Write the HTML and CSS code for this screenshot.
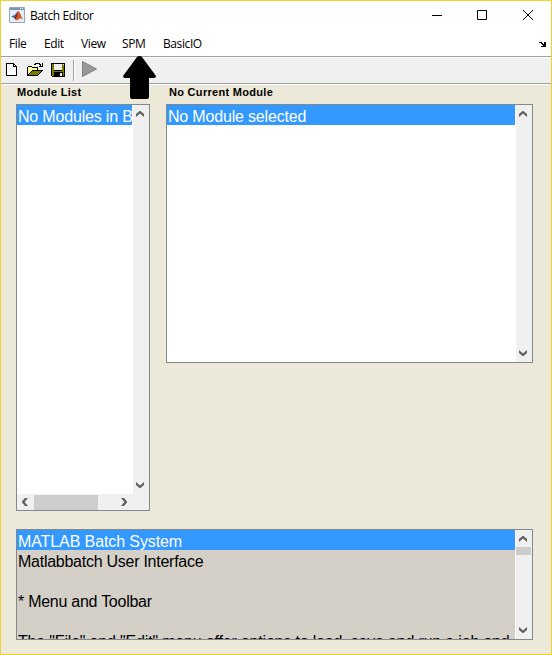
FILE: index.html
```html
<!DOCTYPE html>
<html lang="en">
<head>
<meta charset="utf-8">
<title>Batch Editor</title>
<link rel="stylesheet" href="styles.css">
</head>
<body>
<svg width="0" height="0" class="defs">
  <symbol id="up" viewBox="0 0 8 6"><path d="M0 3 4 -.4 8 3V6L4 2.6 0 6Z"/></symbol>
  <symbol id="down" viewBox="0 0 8 6"><path d="M0 0 4 3.4 8 0V3L4 6.4 0 3Z"/></symbol>
  <symbol id="left" viewBox="0 0 6 8"><path d="M3 0H6L2.6 4 6 8H3L-.4 4Z"/></symbol>
  <symbol id="right" viewBox="0 0 6 8"><path d="M0 0H3L6.4 4 3 8H0L3.4 4Z"/></symbol>
</svg>
<div class="window">
  <header class="titlebar">
    <svg class="logo" width="16" height="16" viewBox="0 0 16 16">
      <path fill="#e5eef5" stroke="#91a8ba" d="M.5.5h15v15H.5z"/>
      <path fill="#7895b2" d="M1 1h14v2H1z"/><path fill="#fff" d="M11 1h1v1h-1zM13 1h1v1h-1z"/>
      <path fill="#3f75a8" d="m2 9.500 3.500-1.500L9 4 7 9.500 5 11z"/>
      <path fill="#7d2c23" d="M9 4 6.500 9 5 11l2 2 3-3z"/>
      <path fill="#dc5524" d="M9 4c2 1 3 5 5 8-2-1-3-1-4 0l-2.500 1.500L6.500 12C8.500 10 8.500 6 9 4z"/>
    </svg>
    <span class="title">Batch Editor</span>
    <svg class="controls" width="102" height="12" viewBox="0 0 102 12" fill="none" stroke="#000">
      <path d="M0 5.500h10M45.500 .5h9v9h-9z"/><path d="m91 0 10 10m0-10L91 10"/>
    </svg>
  </header>
  <nav class="menubar">
    <span class="file">File</span><span class="edit">Edit</span><span class="view">View</span><span class="spm">SPM</span><span class="basic">BasicIO</span>
    <svg class="dock" width="7" height="5" viewBox="0 0 7 5"><path d="M0 0h3v1h1v1h1V0h2v5H2V4h2V3H3V2H2V1H0z"/></svg>
  </nav>
  <div class="toolbar">
    <svg width="102" height="24" viewBox="0 0 102 24" shape-rendering="crispEdges">
      <path fill="#fff" stroke="#000" d="M5.500 5.500h7l3 3v9h-10z"/><path fill="none" stroke="#000" d="M12.500 5.500v3h3"/>
      <path fill="#ffff9c" stroke="#000" d="M26.500 17.500v-8l1-1h3l1 1h5v3h-5z"/>
      <path fill="#7b7b00" stroke="#000" d="m26.500 17.500 5-5h10l-5 5z"/>
      <path fill="none" stroke="#000" d="M33 6.500h1l1-1h3l2 2M41.500 5v3.500H38"/>
      <path fill="#7b7b00" stroke="#000" d="M50.500 5.500h13v13h-12l-1-1z"/>
      <path fill="#efefef" d="M53 6h8v6h-8zM62 6h1v1h-1z"/><path d="M53 12h8v1h-8zM53 14h9v5h-9z"/><path fill="#efefef" d="M59 15h2v3h-2z"/>
      <path fill="#a0a0a0" d="M72 2h1v21h-1z"/><path fill="#fff" d="M73 2h1v21h-1z"/>
      <path fill="#999" stroke="#808080" shape-rendering="auto" d="M81.500 3.500v15l14-7.500z"/>
    </svg>
  </div>
  <main class="content">
    <section class="modules">
      <h2>Module List</h2>
      <div class="listbox tall">
        <div class="rows"><div class="row selected snug">No Modules in Batch</div></div>
        <div class="vbar"><svg class="v"><use href="#up"/></svg><svg class="v"><use href="#down"/></svg></div>
        <div class="hbar"><svg class="h"><use href="#left"/></svg><i class="hthumb"></i><svg class="h last"><use href="#right"/></svg></div>
      </div>
    </section>
    <section class="current">
      <h2>No Current Module</h2>
      <div class="listbox short">
        <div class="rows"><div class="row selected snug">No Module selected</div></div>
        <div class="vbar"><svg class="v"><use href="#up"/></svg><svg class="v"><use href="#down"/></svg></div>
      </div>
    </section>
    <section class="help listbox">
      <div class="rows">
        <div class="row selected heading">MATLAB Batch System</div>
        <div class="row tight">Matlabbatch User Interface</div>
        <div class="row"></div>
        <div class="row tight">* Menu and Toolbar</div>
        <div class="row"></div>
        <div class="row snug">The "File" and "Edit" menu offer options to load, save and run a job and</div>
      </div>
      <div class="vbar"><svg class="v"><use href="#up"/></svg><i class="vthumb"></i><svg class="v"><use href="#down"/></svg></div>
    </section>
  </main>
  <svg class="pointer" width="34" height="44" viewBox="0 0 34 44"><path d="M16.500 0Q18 0 19 1L33 20Q33 22 31 22H26V41Q26 43 24 43H9Q7 43 7 41V22H2Q0 22 0 20L14 1Q15 0 16.500 0Z"/></svg>
</div>
</body>
</html>
```

FILE: styles.css
```css
* { box-sizing: border-box; }
body { margin: 0; }
svg { display: block; flex: none; }
.defs { position: absolute; }
.window {
  position: relative; width: 552px; height: 655px; overflow: hidden;
  display: flex; flex-direction: column;
  border: 1px solid #f2d032; background: #ece9d8;
  font-family: "Liberation Sans", Arial, sans-serif; color: #000;
}
.titlebar, .menubar { background: #fff; font: 12px/16px "Open Sans", "Noto Sans", sans-serif; white-space: nowrap; }
.titlebar { height: 29px; display: flex; padding: 6px 17px 0 8px; }
.title { margin: 1px auto 0 5px; letter-spacing: -.4px; }
.controls { margin-top: 3px; }
.menubar { height: 26px; display: flex; padding: 6px 5px 0 8px; letter-spacing: -.4px; }
.file { width: 35px; }
.edit { width: 37px; }
.view { width: 41px; }
.spm { width: 41px; }
.dock { margin: 6px 0 0 auto; }
.toolbar { height: 29px; padding-top: 1px; background: #f0f0f0; border-top: 1px solid #a0a0a0; border-bottom: 1px solid #fff; box-shadow: inset 0 1px #fff, inset 0 -1px #a0a0a0; }
.content { flex: 1; display: grid; grid-template-columns: 134px 367px; grid-template-rows: 426px 111px; column-gap: 16px; row-gap: 18px; padding: 0 15px; }
h2 { margin: 0; height: 19px; font-size: 11px; line-height: 13px; padding: 1px 0 0 1px; letter-spacing: .3px; white-space: nowrap; }
.current h2 { padding-left: 3px; }
.listbox { border: 1px solid #828790; background: #fff; display: grid; grid-template-columns: minmax(0, 1fr) 17px; }
.tall { height: 407px; grid-template-rows: 389px 16px; }
.short { height: 259px; }
.rows { overflow: hidden; min-width: 0; }
.row { height: 20px; padding: 2px 0 0 1px; font-size: 16px; line-height: 19px; white-space: nowrap; overflow: hidden; }
.snug { letter-spacing: -.18px; }
.tight { letter-spacing: -.26px; }
.heading { letter-spacing: -.1px; }
.selected { background: #39f; color: #fff; }
.vbar { margin-left: 1px; background: #f0f0f0; display: flex; flex-direction: column; justify-content: space-between; padding: 6px 0 6px 3px; }
.v { width: 8px; height: 6px; fill: #606060; }
.hbar { grid-column: 1 / -1; background: #f0f0f0; display: flex; align-items: center; padding-left: 5px; }
.h { width: 6px; height: 8px; fill: #606060; }
.hthumb { width: 64px; height: 15px; margin-left: 6px; background: #cdcdcd; }
.last { margin-left: 23px; }
.help { grid-column: 1 / -1; background: #d4d0c8; grid-template-rows: 109px; }
.help .vbar { margin-left: 0; border-left: 1px solid #fff; }
.vthumb { width: 15px; height: 8px; margin: 5px 0 auto -3px; background: #cdcdcd; }
.pointer { position: absolute; left: 122px; top: 55px; }
```
